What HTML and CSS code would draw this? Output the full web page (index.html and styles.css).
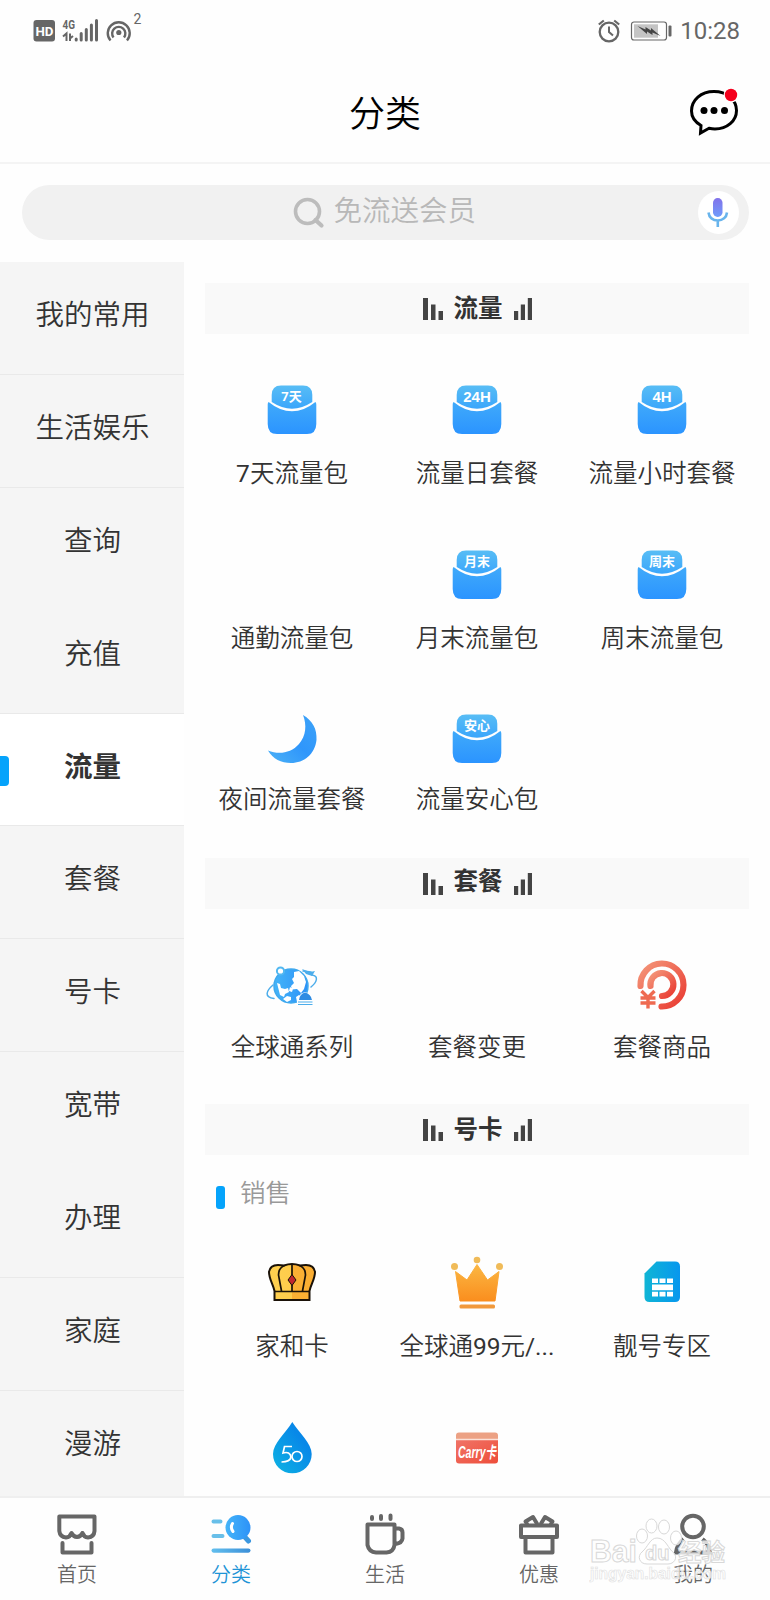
FILE: index.html
```html
<!DOCTYPE html>
<html lang="zh-CN">
<head>
<meta charset="utf-8">
<title>分类</title>
<link rel="stylesheet" href="styles.css">
</head>
<body>
<svg class="defs" width="0" height="0" aria-hidden="true">
  <defs>
    <linearGradient id="gBlue" x1="0" y1="0" x2="0" y2="1"><stop offset="0" stop-color="#58bdf5"/><stop offset="1" stop-color="#3ba6fb"/></linearGradient>
    <linearGradient id="gBody" x1="0" y1="0" x2="0" y2="1"><stop offset="0" stop-color="#40aafa"/><stop offset="1" stop-color="#2b94ff"/></linearGradient>
    <linearGradient id="gMoon" x1="0" y1="1" x2="1" y2="0"><stop offset="0" stop-color="#4cb2f6"/><stop offset=".5" stop-color="#2f96fb"/><stop offset="1" stop-color="#3da3f8"/></linearGradient>
    <linearGradient id="gMic" x1="0" y1="0" x2="0" y2="1"><stop offset="0" stop-color="#8272ea"/><stop offset="1" stop-color="#6f9cfb"/></linearGradient>
    <linearGradient id="gRed" x1="0" y1="0" x2="1" y2="1"><stop offset="0" stop-color="#f4977a"/><stop offset="1" stop-color="#e93a31"/></linearGradient>
    <linearGradient id="gCrown" x1="0" y1="0" x2="0" y2="1"><stop offset="0" stop-color="#fbb743"/><stop offset="1" stop-color="#fa8e1e"/></linearGradient>
    <linearGradient id="gGold" x1="0" y1="0" x2="1" y2="0"><stop offset="0" stop-color="#ffd150"/><stop offset=".5" stop-color="#ffcc4b"/><stop offset=".5" stop-color="#fbb034"/><stop offset="1" stop-color="#fbae32"/></linearGradient>
    <linearGradient id="gSim" x1="0" y1="0" x2="1" y2="0"><stop offset="0" stop-color="#10b5d5"/><stop offset="1" stop-color="#0797ee"/></linearGradient>
    <linearGradient id="gDrop" x1="1" y1="0" x2="0" y2="1"><stop offset=".3" stop-color="#0888e8"/><stop offset="1" stop-color="#0db4e3"/></linearGradient>
    <linearGradient id="gCard" x1="0" y1="0" x2="1" y2="1"><stop offset="0" stop-color="#f07468"/><stop offset="1" stop-color="#ee4e3a"/></linearGradient>
    <linearGradient id="gTab" x1="0" y1="0" x2="1" y2="0"><stop offset="0" stop-color="#62bfee"/><stop offset="1" stop-color="#3b8fd8"/></linearGradient>
    <linearGradient id="gLens" x1="0" y1="0" x2="1" y2="0"><stop offset="0" stop-color="#44b4f8"/><stop offset="1" stop-color="#2d92f8"/></linearGradient>
    <symbol id="envelope" viewBox="0 0 56 56">
      <path d="M17 3.500h22Q48.300 3.500 48.300 13v7Q38 26.700 28 26.700T7.700 20v-7Q7.700 3.500 17 3.500z" fill="url(#gBlue)"/>
      <path d="M4.600 20Q16 29.300 28 29.300t23.400-9.300q.9.600.9 2.500V42q0 10-9.300 10H13Q3.700 52 3.700 42V22.500q0-1.900.9-2.500z" fill="url(#gBody)"/>
    </symbol>
    <symbol id="barsDown" viewBox="0 0 20 22"><path d="M0 0h5v22H0zM8 6.500h4.500V22H8zM15.500 13H20v9h-4.500z" fill="#444"/></symbol>
    <symbol id="barsUp" viewBox="0 0 18 22"><path d="M0 13h4.200v9H0zM6.800 6.500H11V22H6.800zM13.800 0H18v22h-4.200z" fill="#444"/></symbol>
  </defs>
</svg>
<div class="app">
  <header class="status">
    <svg class="status-left" width="116" height="42" viewBox="0 0 116 42">
      <rect x=".5" y="12" width="21.500" height="21.500" rx="3" fill="#666"/>
      <text x="2.500" y="28" class="t-hd" textLength="18" lengthAdjust="spacingAndGlyphs">HD</text>
      <text x="29.500" y="20.500" class="t-4g" textLength="12.500" lengthAdjust="spacingAndGlyphs">4G</text>
      <path d="M33.500 33v-7.500l-3.500 3M37 25.500V33m0-2.500 3-2.500" fill="none" stroke="#666" stroke-width="2"/>
      <path d="M43.200 32v-1M48.200 32v-6.500M53.300 32V21.500M58.400 32V17M63.500 32V12.500" stroke="#666" stroke-width="3" stroke-linecap="round"/>
      <g fill="none" stroke="#666" stroke-width="2.400"><path d="M77.500 32.500a11 11 0 1 1 16.500 0"/><path d="M80.500 29.500a6.600 6.600 0 1 1 10.500 0"/></g>
      <circle cx="85.800" cy="24.500" r="2.600" fill="#666"/>
      <text x="100.500" y="15.500" class="t-sup">2</text>
    </svg>
    <div class="status-right">
      <svg width="74" height="24" viewBox="0 0 74 24">
        <g fill="none" stroke="#666"><circle cx="11" cy="13" r="9.300" stroke-width="2.300"/><path d="M11 7.500V13l4 3.500" stroke-width="2"/><path d="M.8 5.500l5-4M21.200 5.500l-5-4" stroke-width="2.200"/>
        <rect x="33.500" y="3" width="35" height="18" rx="2.500" stroke-width="1.200"/></g>
        <rect x="36" y="5.300" width="24" height="13.400" fill="#c4c4c4"/>
        <path d="M39.500 7l8 3.500 0-2.500 5.500 3.500 0-2.500 9.500 8-8-3.500v2.500l-5.500-3.500v2.500z" fill="#444"/>
        <rect x="70.500" y="6.500" width="3" height="11" rx="1" fill="#666"/>
      </svg>
      <span class="clock">10:28</span>
    </div>
  </header>

  <div class="titlebar">
    <h1 class="title">分类</h1>
    <svg class="chat" width="50" height="50" viewBox="0 0 50 50">
      <path d="M12 37.500C6 34 2.500 29 2.500 23 2.500 12 12 3.500 25 3.500S47.500 12 47.500 22.500 38 41 26 41q-3 0-6-.7L11.500 45z" fill="#fff" stroke="#000" stroke-width="3"/>
      <g><circle cx="15" cy="22.500" r="3.500"/><circle cx="25" cy="22.500" r="3.500"/><circle cx="35.500" cy="22.500" r="3.500"/></g>
      <circle cx="42" cy="7" r="7.500" fill="#fff"/><circle cx="42" cy="7" r="6.200" fill="#f5001d"/>
    </svg>
  </div>

  <div class="search">
    <svg width="32" height="32" viewBox="0 0 32 32"><circle cx="14.500" cy="14.500" r="12" fill="none" stroke="#bcbcbc" stroke-width="3.600"/><path d="M22.500 23l6 5.500" stroke="#bcbcbc" stroke-width="4.200" stroke-linecap="round"/></svg>
    <span class="search-text">免流送会员</span>
    <span class="mic"><svg width="24" height="32" viewBox="0 0 24 32"><rect x="7" y="1" width="9.500" height="19" rx="4.700" fill="url(#gMic)"/><path d="M2.500 15.500c.5 5 4.500 8 9.300 8s8.700-3 9.200-8M11.800 23.500V30" fill="none" stroke="#68b4ec" stroke-width="2.600"/></svg></span>
  </div>

  <div class="body">
    <nav class="side">
      <a class="side-item">我的常用</a>
      <a class="side-item">生活娱乐</a>
      <a class="side-item plain">查询</a>
      <a class="side-item">充值</a>
      <a class="side-item active">流量</a>
      <a class="side-item">套餐</a>
      <a class="side-item">号卡</a>
      <a class="side-item plain">宽带</a>
      <a class="side-item">办理</a>
      <a class="side-item">家庭</a>
      <a class="side-item">漫游</a>
    </nav>

    <main class="content">
      <h2 class="section"><svg width="20" height="22"><use href="#barsDown"/></svg><span>流量</span><svg width="18" height="22"><use href="#barsUp"/></svg></h2>
      <div class="grid grid-data">
        <div class="tile"><svg class="icon" viewBox="0 0 56 56"><use href="#envelope"/><text x="27.500" y="19" class="t-env">7天</text></svg><span><b class="num">7</b>天流量包</span></div>
        <div class="tile"><svg class="icon" viewBox="0 0 56 56"><use href="#envelope"/><text x="28" y="19.500" class="t-env t-lat">24H</text></svg><span>流量日套餐</span></div>
        <div class="tile"><svg class="icon" viewBox="0 0 56 56"><use href="#envelope"/><text x="28" y="19.500" class="t-env t-lat">4H</text></svg><span>流量小时套餐</span></div>
        <div class="tile"><svg class="icon" viewBox="0 0 56 56"></svg><span>通勤流量包</span></div>
        <div class="tile"><svg class="icon" viewBox="0 0 56 56"><use href="#envelope"/><text x="28" y="19" class="t-env">月末</text></svg><span>月末流量包</span></div>
        <div class="tile"><svg class="icon" viewBox="0 0 56 56"><use href="#envelope"/><text x="28" y="19" class="t-env">周末</text></svg><span>周末流量包</span></div>
        <div class="tile short"><svg class="icon" viewBox="0 0 56 56"><path d="M39 4C49 10 53 18 52.500 29 51 43 40 52 27 52 17 52 9 48 4 39.500 15 44 27 42 35 33 42 25 43 14 39 4z" fill="url(#gMoon)"/></svg><span>夜间流量套餐</span></div>
        <div class="tile short"><svg class="icon" viewBox="0 0 56 56"><use href="#envelope"/><text x="28" y="19" class="t-env">安心</text></svg><span>流量安心包</span></div>
      </div>

      <h2 class="section high"><svg width="20" height="22"><use href="#barsDown"/></svg><span>套餐</span><svg width="18" height="22"><use href="#barsUp"/></svg></h2>
      <div class="grid grid-plan">
        <div class="tile"><svg class="icon" viewBox="0 0 56 56">
          <circle cx="27" cy="29" r="17" fill="url(#gLens)" stroke="#3fa9ee" stroke-width="1.500"/>
          <path d="M30 15l5-1 5 5 2 6-2 7-3 4-4-4-5 .5-1-3.500 3-3-2-4 2-2zM13 26l3 1 1 4 4 1 3-1 1 4-4 2-1 3-4-2zM26 30l3 2-1 3-3-1zM19 42l4-3 4 1 0 3-4 2zM32 40l3-2 1 4-3 3z" fill="#fff"/>
          <circle cx="16.500" cy="14" r="3.600" fill="#fff" stroke="#52b8f1" stroke-width="2"/>
          <path d="M9 28C2 34 0 40 10 41.500M39 14l8 1M48 18c7 1 5 7-1 12" fill="none" stroke="#4cadeb" stroke-width="1.500" stroke-linecap="round"/>
          <path d="M38 12l8 3 5-1-3 5-6-2z" fill="#4cadeb"/>
          <path d="M33 48V44q1-7 8-9 7 2 8 9v4z" fill="#fff"/><path d="M35 43q.5-6 6-7.500 6 1.500 7 7.500z" fill="#2f8ce3"/><path d="M34 45h14.500M34 47.500h14.500" stroke="#4cadeb" stroke-width="1.200"/>
        </svg><span>全球通系列</span></div>
        <div class="tile"><svg class="icon" viewBox="0 0 56 56"></svg><span>套餐变更</span></div>
        <div class="tile"><svg class="icon" viewBox="0 0 56 56">
          <g fill="none" stroke="url(#gRed)" stroke-width="6.200" stroke-linecap="round"><path d="M6.500 29A21.500 21.500 0 1 1 27.500 49.500"/><path d="M16.500 29A11.500 11.500 0 1 1 28 39"/></g>
          <path d="M7.500 34l6.500 6.500L20.500 34M6.500 41h15M6.500 46h15M14 40.500v11" fill="none" stroke="#ee6a51" stroke-width="3.400"/>
        </svg><span>套餐商品</span></div>
      </div>

      <h2 class="section"><svg width="20" height="22"><use href="#barsDown"/></svg><span>号卡</span><svg width="18" height="22"><use href="#barsUp"/></svg></h2>
      <h3 class="subhead">销售</h3>
      <div class="grid grid-card">
        <div class="tile"><svg class="icon" viewBox="0 0 56 56">
          <path d="M10.500 46v-9C9 30 5 25 5 18q1-7 9-7 3 0 6 .5 4-1.500 8-1.500t8 1.500q3-.5 6-.5 8 0 9 7c0 7-4 12-5.500 19v9z" fill="url(#gGold)" stroke="#1b1208" stroke-width="2"/>
          <path d="M10.500 37.500h35M17.500 37L14.500 21q0-7 6-9.500M38.500 37l3-16q0-7-6-9.500M28 10v27" fill="none" stroke="#1b1208" stroke-width="1.700"/>
          <path d="M28 20.500l4 5.500-4 5.500-4-5.500z" fill="#c2252e" stroke="#1b1208" stroke-width="1"/>
        </svg><span>家和卡</span></div>
        <div class="tile"><svg class="icon" viewBox="0 0 56 56">
          <path d="M6.500 17.500L18 26 28 10.500 38.500 26 50 17.500 46 47H11z" fill="url(#gCrown)" stroke="url(#gCrown)" stroke-linejoin="round"/>
          <g fill="#f0bb58"><circle cx="5.500" cy="12.500" r="3.500"/><circle cx="28" cy="6" r="3.300"/><circle cx="50.500" cy="12.500" r="3.500"/></g>
          <rect x="10.500" y="50.500" width="35.500" height="4" rx="1.500" fill="#f1993c"/>
        </svg><span>全球通<b class="num">99</b>元<b class="num">/...</b></span></div>
        <div class="tile"><svg class="icon" viewBox="0 0 56 56">
          <path d="M22.500 7.500H41q5 0 5 5V43q0 5-5 5H15.500q-5 0-5-5V19.500z" fill="url(#gSim)"/>
          <path d="M18 24.500h6v4.500h-6zM25.500 24.500h6V29h-6zM33 24.500h6V29h-6zM18 30.500h21v5.700H18zM18 37.700h6v4.800h-6zM25.500 37.700h6v4.800h-6zM33 37.700h6v4.800h-6z" fill="#fff"/>
        </svg><span>靓号专区</span></div>
        <div class="tile"><svg class="icon" viewBox="0 0 56 56"><path d="M28.300 3C35 14 47.700 24 47.700 35a19.300 19.300 0 0 1-38.700 0C9 24 22 14 28.300 3z" fill="url(#gDrop)"/>
          <path d="M28 27.500h-7.500L19 34q7-2 8 4-1 5-9.500 5" fill="none" stroke="#fff" stroke-width="1.700"/><ellipse cx="33" cy="37.500" rx="5" ry="5" fill="none" stroke="#fff" stroke-width="1.700"/></svg></div>
        <div class="tile"><svg class="icon" viewBox="0 0 56 56"><path d="M10 13.500h36q3 0 3 3v4H7v-4q0-3 3-3z" fill="#eca184"/><path d="M7 20h42v21.500q0 3-3 3H10q-3 0-3-3z" fill="url(#gCard)"/><path d="M7 20.500h42" stroke="#fbe1d8" stroke-width="1.300"/>
          <text x="9" y="38.500" class="t-carry" textLength="38" lengthAdjust="spacingAndGlyphs">Carry卡</text></svg></div>
      </div>
    </main>
  </div>

  <footer class="tabs">
    <a class="tab"><svg width="42" height="44" viewBox="0 0 42 44"><path d="M3.300 3.500h35.200v14.500q-.5 6-6.500 6.500-4-.3-5.500-4.500-2 3.800-5.500 4-3.500-.2-5.500-4-1.500 4.200-5.500 4.500-6-.5-6.700-6.500z" fill="none" stroke="#666" stroke-width="4" stroke-linejoin="round"/><path d="M6.500 30v9.500h29V30" fill="none" stroke="#666" stroke-width="4" stroke-linecap="round" stroke-linejoin="round"/></svg><span>首页</span></a>
    <a class="tab on"><svg width="42" height="44" viewBox="0 0 42 44"><path d="M3.500 8.500h7M3.500 23h9" stroke="#68bfe9" stroke-width="4" stroke-linecap="round"/><rect x="1.500" y="35.500" width="39" height="4.200" rx="2.100" fill="url(#gTab)"/><path d="M33 22l5.500 6" stroke="#3b97e0" stroke-width="5" stroke-linecap="round"/><circle cx="28" cy="14.500" r="12.500" fill="url(#gLens)"/><path d="M22.500 10.500q-2.500 4 .5 8" fill="none" stroke="#fff" stroke-width="3" stroke-linecap="round"/></svg><span>分类</span></a>
    <a class="tab"><svg width="42" height="44" viewBox="0 0 42 44"><path d="M3.500 11.500h27V32q-1 7-8 7.500H12q-7-.5-8.500-7.500zM31 15.500h4q3.500.5 3.500 4v6q-.5 4.500-7 5.500" fill="none" stroke="#666" stroke-width="4" stroke-linejoin="round"/><path d="M8 4v2M17 3v3M26.500 2.500V6" stroke="#666" stroke-width="4" stroke-linecap="round"/></svg><span>生活</span></a>
    <a class="tab"><svg width="42" height="44" viewBox="0 0 42 44"><g fill="none" stroke="#666" stroke-width="4" stroke-linejoin="round"><rect x="3" y="12.500" width="36" height="11.500"/><path d="M7.500 24v15.500h27V24"/><path d="M19.500 11.500L15 4 7.500 8.500l2 3M22.500 11.500L27 4l7.500 4.500-2 3"/></g></svg><span>优惠</span></a>
    <a class="tab"><svg width="42" height="44" viewBox="0 0 42 44"><g fill="none" stroke="#666" stroke-width="4"><circle cx="21" cy="13.500" r="10.800"/><path d="M11.500 26Q5 31 4 39.500h34Q37 31 30.500 26"/></g></svg><span>我的</span></a>
    <svg class="watermark" width="142" height="72" viewBox="0 0 142 72" aria-hidden="true">
      <g fill="#fff" fill-opacity=".75" stroke="#d8d8d8" stroke-width="1">
        <text x="1" y="46" class="wm-big" textLength="47" lengthAdjust="spacingAndGlyphs">Bai</text>
        <ellipse cx="53" cy="20" rx="5.500" ry="7"/><ellipse cx="62.500" cy="10" rx="5.500" ry="7"/><ellipse cx="75" cy="11" rx="5.500" ry="7"/><ellipse cx="87" cy="22" rx="5.500" ry="7"/>
        <path d="M68 22c9 0 11 11 17 15 4 5 0 11-6 11H58c-8 0-10-8-5-12 6-5 8-14 15-14z"/>
        <text x="56" y="44" class="wm-du">du</text>
        <text x="89" y="45" class="wm-cn" textLength="47" lengthAdjust="spacingAndGlyphs">经验</text>
      </g>
      <text x="1" y="63" class="wm-url" textLength="136" lengthAdjust="spacingAndGlyphs">jingyan.baidu.com</text>
    </svg>
  </footer>
</div>
</body>
</html>
```

FILE: styles.css
```css
* { box-sizing: border-box; }

body {
  margin: 0;
  background: #fefefe;
  color: #333;
  font-family: Roboto, "Noto Sans CJK SC", sans-serif;
  font-weight: 350;
}

.defs { position: absolute; }

.app {
  display: flex;
  flex-direction: column;
  width: 770px;
  height: 1600px;
  overflow: hidden;
}

h1, h2, h3 { margin: 0; }

/* status bar */
.status {
  display: flex;
  justify-content: space-between;
  height: 60px;
  padding: 8px 30px 0 33px;
}
.status-right {
  display: flex;
  align-items: center;
  gap: 8px;
  height: 45px;
}
.clock { color: #666; font-size: 24px; line-height: 30px; font-weight: 400; }
.t-hd { font: 700 13.500px Roboto, sans-serif; fill: #fff; }
.t-4g { font: 700 13px Roboto, sans-serif; fill: #666; }
.t-sup { font: 400 14px Roboto, sans-serif; fill: #666; }

/* title bar */
.titlebar {
  display: grid;
  grid-template-columns: 1fr auto 1fr;
  align-items: center;
  height: 104px;
  padding: 3px 31px 0;
  border-bottom: 2px solid #f4f4f4;
}
.title {
  grid-column: 2;
  padding-top: 5px;
  color: #000;
  font-size: 36px;
  line-height: 44px;
  font-weight: 350;
}
.chat { justify-self: end; overflow: visible; }

/* search */
.search {
  display: flex;
  align-items: center;
  gap: 9px;
  height: 55px;
  margin: 21px 21.500px 22px 21.500px;
  padding: 0 10px 0 271px;
  border-radius: 28px;
  background: #f1f1f1;
}
.search-text { color: #b8b8b8; font-size: 28.500px; line-height: 36px; padding-bottom: 2px; }
.mic {
  display: flex;
  align-items: center;
  justify-content: center;
  width: 41px;
  height: 43px;
  margin-left: auto;
  border-radius: 50%;
  background: #fff;
}

/* category layout */
.body {
  display: grid;
  grid-template-columns: 184px 1fr;
  height: 1234px;
  overflow: hidden;
}
.side { display: flex; flex-direction: column; background: #f5f5f5; }
.side-item {
  position: relative;
  flex: none;
  height: 112.900px;
  padding: 0 0 11px 1px;
  display: flex;
  align-items: center;
  justify-content: center;
  border-bottom: 1.500px solid #e9e9e9;
  font-size: 28.500px;
}
.side-item.plain { border-bottom-color: transparent; }
.side-item.active { background: #fff; font-weight: 700; }
.side-item.active::before {
  content: "";
  position: absolute;
  left: 0;
  top: 42px;
  width: 8.500px;
  height: 30px;
  border-radius: 0 4px 4px 0;
  background: #05a3fb;
}

.content { padding: 21px 0 0; }
.section {
  display: flex;
  justify-content: center;
  gap: 11px;
  height: 51px;
  margin: 0 21px;
  padding-top: 15px;
  background: #f9f9f9;
  font-size: 24.500px;
  line-height: 20px;
  font-weight: 700;
}
.section span { margin-top: 1px; }
.section.high span { margin-top: -1px; }

.grid {
  display: grid;
  grid-template-columns: repeat(3, 185px);
  grid-auto-rows: 164.500px;
  padding: 48px 0 0 15.500px;
}
.grid-data { height: 524px; }
.grid-plan { height: 195px; }
.grid-card { padding-top: 0; }
.tile { display: flex; flex-direction: column; align-items: center; gap: 21px; }
.grid-plan .tile { gap: 20px; }
.tile span { font-size: 24.500px; line-height: 30px; white-space: nowrap; }
.tile.short { gap: 18px; }
.grid-card .tile { gap: 22px; }
.num { font-weight: 400; }
.icon { display: block; width: 56px; height: 56px; }

.t-env { font: 700 13px Roboto, "Noto Sans CJK SC", sans-serif; fill: #fff; text-anchor: middle; }
.t-env.t-lat { font: 700 15px "Liberation Sans", sans-serif; }
.t-carry { font: italic 700 16px "Liberation Sans", "Noto Sans CJK SC", sans-serif; fill: #fff; }

.subhead {
  display: flex;
  align-items: flex-start;
  gap: 15px;
  height: 99px;
  padding: 23px 0 0 32px;
  color: #999;
  font-size: 25.500px;
  line-height: 30px;
  font-weight: 350;
}
.subhead::before {
  content: "";
  width: 9px;
  height: 23px;
  margin-top: 8px;
  border-radius: 3px;
  background: #05a3fb;
}

/* bottom tabs */
.tabs {
  position: relative;
  display: grid;
  grid-template-columns: repeat(5, 1fr);
  height: 104px;
  padding-top: 15px;
  border-top: 2px solid #efefef;
  background: #fefefe;
}
.tab { display: flex; flex-direction: column; align-items: center; gap: 6px; color: #666; }
.tab span { font-size: 20px; line-height: 24px; }
.tab.on { color: #1e94d6; }
.watermark { position: absolute; left: 589px; top: 18px; }
.wm-big { font: 700 31px "Liberation Sans", sans-serif; }
.wm-du { font: 700 20px "Liberation Sans", sans-serif; }
.wm-cn { font: 700 24px "Noto Sans CJK SC", sans-serif; }
.wm-url { font: 700 16px "Liberation Sans", sans-serif; fill: #fff; fill-opacity: .75; stroke: #e0e0e0; stroke-width: .6; }
```
